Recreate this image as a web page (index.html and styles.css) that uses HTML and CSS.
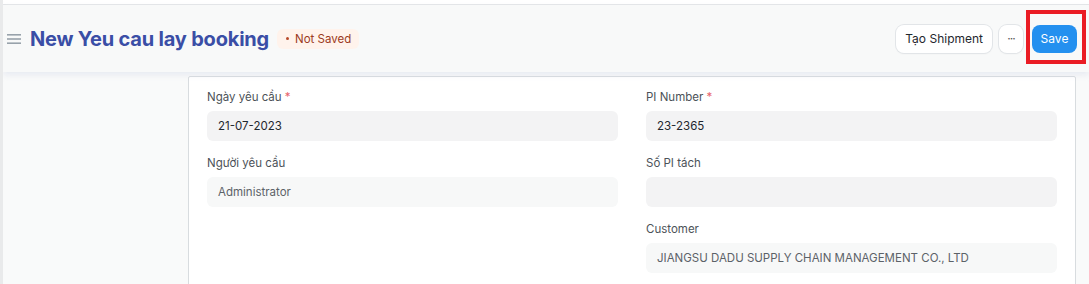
FILE: index.html
```html
<!DOCTYPE html>
<html lang="en">
<head>
    <meta charset="UTF-8">
    <meta name="viewport" content="width=device-width, initial-scale=1.0">
    <title>New Yeu cau lay booking</title>
    <link rel="stylesheet" href="styles.css">
</head>
<body>
    <div class="topbar"></div>

    <!-- Page head -->
    <div class="page-head">
        <div class="title-area">
            <span class="menu-icon">
                <svg width="14" height="10" viewBox="0 0 14 10">
                    <rect x="0" y="0" width="14" height="1.6" fill="#98a2ab"/>
                    <rect x="0" y="4.2" width="14" height="1.6" fill="#98a2ab"/>
                    <rect x="0" y="8.4" width="14" height="1.6" fill="#98a2ab"/>
                </svg>
            </span>
            <h1 class="title">New Yeu cau lay booking</h1>
            <span class="pill"><span class="dot"></span>Not Saved</span>
        </div>
        <div class="actions">
            <button class="btn">Tạo Shipment</button>
            <button class="btn btn-more">···</button>
            <button class="btn btn-primary">Save</button>
            <div class="highlight"></div>
        </div>
    </div>

    <!-- Form -->
    <div class="page-body">
        <div class="form-card">
            <div class="column">
                <div class="field">
                    <label>Ngày yêu cầu <span class="req">*</span></label>
                    <div class="input">21-07-2023</div>
                </div>
                <div class="field">
                    <label>Người yêu cầu</label>
                    <div class="input readonly">Administrator</div>
                </div>
            </div>
            <div class="column">
                <div class="field">
                    <label>PI Number <span class="req">*</span></label>
                    <div class="input">23-2365</div>
                </div>
                <div class="field">
                    <label>Số PI tách</label>
                    <div class="input"></div>
                </div>
                <div class="field">
                    <label>Customer</label>
                    <div class="input readonly">JIANGSU DADU SUPPLY CHAIN MANAGEMENT CO., LTD</div>
                </div>
            </div>
        </div>
    </div>
</body>
</html>
```

FILE: styles.css
```css
body {
    font-family: Inter, "Noto Sans", sans-serif;
    background-color: #f9fafa;
    margin: 0;
    border-left: 3px solid #e9eaeb;
    height: 284px;
    overflow: hidden;
    color: #1f272e;
}
.topbar {
    height: 4px;
    background-color: #fff;
    border-bottom: 1px solid #e4e6e8;
}
.page-head {
    position: relative;
    display: flex;
    justify-content: space-between;
    align-items: center;
    height: 67px;
    padding: 0 12px 0 4px;
    background-color: #f8f9f9;
    box-shadow: 0 3px 6px rgba(200, 205, 225, 0.35);
}
.title-area {
    display: flex;
    align-items: center;
}
.menu-icon {
    display: flex;
    width: 14px;
    margin-right: 9px;
}
.title {
    margin: 0;
    font-size: 20px;
    font-weight: 700;
    color: #3a4ea6;
    letter-spacing: -0.2px;
}
.pill {
    display: inline-flex;
    align-items: center;
    margin-left: 8px;
    height: 20px;
    padding: 0 8px 0 9px;
    border-radius: 6px;
    background-color: #fff3ec;
    color: #9c3a22;
    font-size: 11.5px;
}
.pill .dot {
    width: 3px;
    height: 3px;
    border-radius: 50%;
    background-color: #b84a2a;
    margin-right: 6px;
}
.actions {
    display: flex;
    align-items: center;
    gap: 7px;
}
.btn {
    height: 28px;
    padding: 0 9px;
    border: none;
    border-radius: 8px;
    background-color: #fff;
    color: #1f272e;
    font-family: inherit;
    font-size: 12px;
    box-shadow: 0 0 0 1px #e2e5e8, 0 1px 2px rgba(0, 0, 0, 0.06);
}
.btn-more {
    width: 24px;
    padding: 0;
    letter-spacing: -1px;
    color: #555;
}
.btn-primary {
    margin-left: 2px;
    width: 45px;
    padding: 0;
    background-color: #2490ef;
    color: #fff;
    box-shadow: none;
}
.highlight {
    position: absolute;
    right: 3px;
    top: 5px;
    width: 60px;
    height: 54px;
    box-sizing: border-box;
    border: 4px solid #ea1c24;
}
.page-body {
    padding: 4px 13px 0 185px;
}
.form-card {
    display: flex;
    gap: 28px;
    padding: 12px 18px 0 18px;
    background-color: #fff;
    border: 1px solid #d8dcdf;
    border-radius: 2px;
    height: 300px;
}
.column {
    flex: 1;
}
.field {
    margin-bottom: 14px;
}
.field label {
    display: block;
    font-size: 11.5px;
    line-height: 16px;
    margin-bottom: 6px;
    color: #4c5258;
}
.req {
    color: #e8656b;
}
.input {
    height: 30px;
    line-height: 30px;
    padding: 0 11px;
    border-radius: 6px;
    background-color: #f3f3f4;
    font-size: 11.5px;
    color: #1f272e;
}
.input.readonly {
    background-color: #f7f8f8;
    color: #5c6268;
}
```
